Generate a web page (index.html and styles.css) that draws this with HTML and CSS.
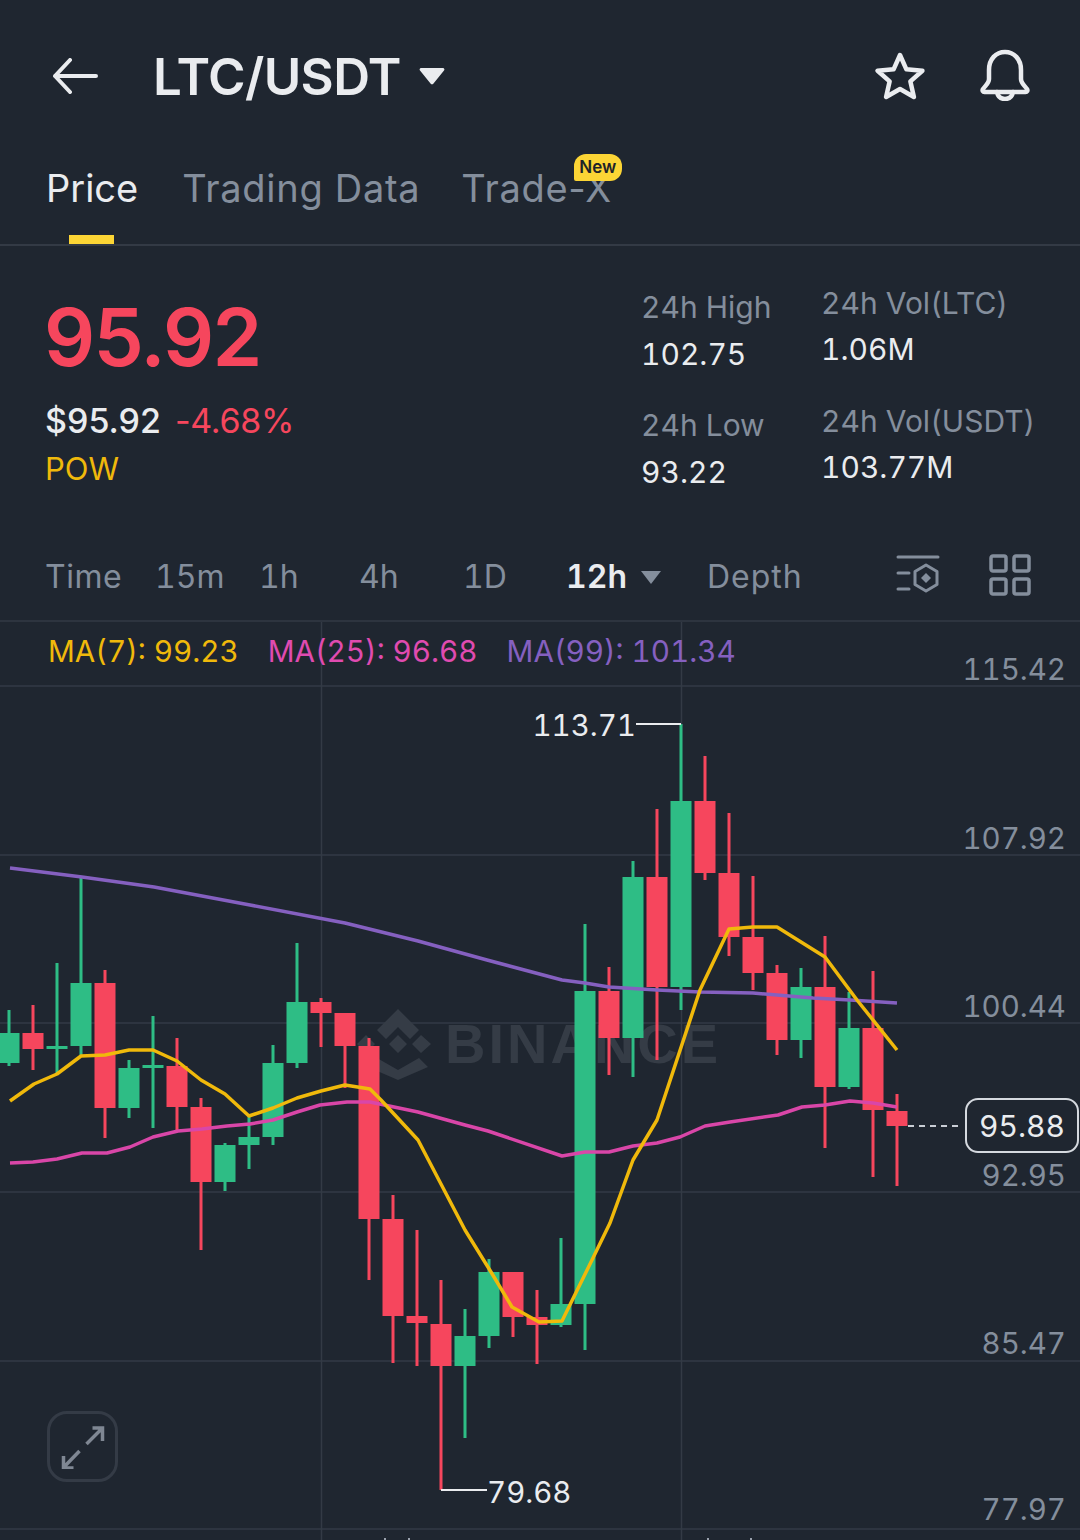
FILE: index.html
```html
<!DOCTYPE html>
<html lang="en">
<head>
    <meta charset="UTF-8">
    <meta name="viewport" content="width=device-width, initial-scale=1.0">
    <title>LTC/USDT</title>
    <link rel="stylesheet" href="styles.css">
</head>
<body>
    <div class="app">
        <header class="header">
            <svg class="back-icon" viewBox="0 0 46 36" fill="none" stroke="#eaecef" stroke-width="4" stroke-linecap="round" stroke-linejoin="round">
                <path d="M44 18H3M18 2L3 18l15 16"/>
            </svg>
            <div class="pair">LTC/USDT</div>
            <svg class="pair-caret" viewBox="0 0 26 18"><path d="M2 1h22a1.500 1.500 0 0 1 1 2.500L14.500 16.500a2 2 0 0 1-3 0L1 3.500A1.500 1.500 0 0 1 2 1z" fill="#eaecef"/></svg>
            <svg class="star-icon" viewBox="0 0 50 48" fill="none" stroke="#eaecef" stroke-width="4.500" stroke-linejoin="round">
                <path d="M25 3l6.400 14.300 16 1.500-12 10.600 3.500 15.600L25 37l-13.900 8 3.500-15.600-12-10.600 16-1.500z"/>
            </svg>
            <svg class="bell-icon" viewBox="0 0 50 52" fill="none" stroke="#eaecef" stroke-width="4.500" stroke-linejoin="round" stroke-linecap="round">
                <path d="M9 21c0-11 7-18 16-18s16 7 16 18v9c0 4 3 6 6 10 1 1.500 0 3-1.500 3h-41c-1.500 0-2.500-1.500-1.500-3 3-4 6-6 6-10z"/>
                <path d="M17 43c1 5 4 7 8 7s7-2 8-7"/>
            </svg>
        </header>

        <nav class="tabs">
            <div class="tab tab-active">Price<span class="tab-bar"></span></div>
            <div class="tab">Trading Data</div>
            <div class="tab tab-trade">Trade-X<span class="badge">New</span></div>
        </nav>

        <section class="stats">
            <div class="stats-main">
                <div class="last-price">95.92</div>
                <div class="change-row">
                    <span class="fiat">$95.92</span>
                    <span class="change">-4.68%</span>
                </div>
                <div class="tag">POW</div>
            </div>
            <div class="stats-col stats-col-left">
                <div class="stat">
                    <div class="stat-label">24h High</div>
                    <div class="stat-value">102.75</div>
                </div>
                <div class="stat">
                    <div class="stat-label">24h Low</div>
                    <div class="stat-value">93.22</div>
                </div>
            </div>
            <div class="stats-col">
                <div class="stat">
                    <div class="stat-label">24h Vol(LTC)</div>
                    <div class="stat-value">1.06M</div>
                </div>
                <div class="stat">
                    <div class="stat-label">24h Vol(USDT)</div>
                    <div class="stat-value">103.77M</div>
                </div>
            </div>
        </section>

        <div class="intervals">
            <span class="interval w-time">Time</span>
            <span class="interval w-15m">15m</span>
            <span class="interval w-1h">1h</span>
            <span class="interval w-4h">4h</span>
            <span class="interval w-1d">1D</span>
            <span class="interval interval-active">12h</span>
            <svg class="interval-caret" viewBox="0 0 22 13"><path d="M1 0h20L11 13z" fill="#848e9c"/></svg>
            <span class="interval w-depth">Depth</span>
            <svg class="settings-icon" viewBox="0 0 44 42" fill="none" stroke="#848e9c" stroke-width="3" stroke-linecap="round">
                <path d="M2 2h40M2 18h11M2 34h11"/>
                <path d="M30 10l11 6.500v13L30 36l-11-6.500v-13z" stroke-linejoin="round"/>
                <path d="M30 18l5 5-5 5-5-5z" fill="#848e9c" stroke="none"/>
            </svg>
            <svg class="grid-icon" viewBox="0 0 42 42" fill="none" stroke="#848e9c" stroke-width="3.500">
                <rect x="2" y="2" width="15" height="15" rx="2"/>
                <rect x="25" y="2" width="15" height="15" rx="2"/>
                <rect x="2" y="25" width="15" height="15" rx="2"/>
                <rect x="25" y="25" width="15" height="15" rx="2"/>
            </svg>
        </div>

        <div class="chart">
            <svg class="chart-svg" id="chart-svg" viewBox="0 622 1080 918">
                <g class="grid">
                    <path d="M0 686H1080M0 855H1080M0 1023H1080M0 1192H1080M0 1361H1080M0 1529H1080M321.500 622V1540M681.500 622V1540"/>
                </g>
                <g class="watermark">
                    <path d="M398 1009l21 21-9 9-12-12-12 12-9-9zM431 1044l-10 9-9-9 9-9zM398 1035l9 9-9 9-9-9zM375 1044l-9 9-9-9 9-9zM419 1058l9 9-30 13-30-13 9-9 21 12z"/>
                    <text x="445" y="1063">BINANCE</text>
                </g>
                <g id="candles"></g>
                <polyline class="ma ma99" points="10,868 82,877 154,887 250,905 345,923 418,941 487,960 562,980 585,983 609,987 657,990 700,992 753,993 813,998 850,1000 897,1003"/>
                <polyline class="ma ma25" points="10,1163 33,1162 57,1159 82,1153 107,1153 130,1147 153,1137 178,1131 202,1129 227,1126 250,1124 273,1120 297,1112 320,1105 347,1102 370,1102 418,1112 465,1125 488,1131 562,1156 585,1152 609,1152 633,1146 657,1143 680,1137 705,1126 730,1122 778,1115 802,1107 825,1105 850,1101 873,1103 897,1107"/>
                <polyline class="ma ma7" points="10,1101 34,1084 57,1074 81,1056 105,1055 129,1050 153,1050 177,1061 201,1080 225,1094 249,1116 273,1108 297,1098 321,1091 345,1085 370,1089 381,1100 418,1140 465,1230 491,1272 512,1307 539,1322 562,1321 592,1260 610,1223 633,1160 657,1120 700,990 729,929 753,927 777,927 825,957 857,1000 897,1050"/>
                <path class="marker" d="M636 724H681M441 1490H487"/>
                <path class="last-line" d="M908 1126H963"/>
                <!-- tops of the time axis labels, only just on screen -->
                <path class="time-ticks" d="M385 1538v2M409 1538v2M708 1538v2M751 1538v2"/>
            </svg>

            <div class="ma-legend">
                <span class="ma-seven">MA(7): 99.23</span>
                <span class="ma-twentyfive">MA(25): 96.68</span>
                <span class="ma-ninetynine">MA(99): 101.34</span>
            </div>

            <!-- price axis, placed at the gridlines -->
            <span class="axis axis-1">115.42</span>
            <span class="axis axis-2">107.92</span>
            <span class="axis axis-3">100.44</span>
            <span class="axis axis-4">92.95</span>
            <span class="axis axis-5">85.47</span>
            <span class="axis axis-6">77.97</span>

            <span class="extreme extreme-high">113.71</span>
            <span class="extreme extreme-low">79.68</span>
            <span class="last-pill">95.88</span>

            <div class="expand">
                <svg viewBox="0 0 44 44" fill="none" stroke="#7f8793" stroke-width="3.500">
                    <path d="M25.500 19L41 3.500M31.500 3H41.500V16M18.500 26L3 42M12.500 43H2.500V31"/>
                </svg>
            </div>
        </div>
    </div>

    <script>
        // x of the first candle is 9, then one every 24px
        // [dir, bodyTop, bodyBottom, wickTop, wickBottom]
        let candles = [
            ["g", 1033, 1063, 1010, 1066],
            ["r", 1033, 1049, 1005, 1070],
            ["g", 1046, 1049, 963, 1073],
            ["g", 983, 1046, 877, 1055],
            ["r", 983, 1108, 970, 1138],
            ["g", 1068, 1108, 1060, 1118],
            ["g", 1065, 1068, 1016, 1128],
            ["r", 1066, 1107, 1038, 1130],
            ["r", 1107, 1182, 1098, 1250],
            ["g", 1145, 1182, 1143, 1191],
            ["g", 1137, 1145, 1115, 1169],
            ["g", 1063, 1137, 1045, 1145],
            ["g", 1002, 1063, 943, 1068],
            ["r", 1002, 1013, 998, 1047],
            ["r", 1013, 1046, 1013, 1088],
            ["r", 1046, 1219, 1038, 1280],
            ["r", 1219, 1316, 1195, 1363],
            ["r", 1316, 1323, 1230, 1366],
            ["r", 1324, 1366, 1280, 1490],
            ["g", 1336, 1366, 1309, 1438],
            ["g", 1272, 1336, 1259, 1348],
            ["r", 1272, 1317, 1272, 1337],
            ["r", 1317, 1325, 1290, 1364],
            ["g", 1304, 1325, 1238, 1327],
            ["g", 991, 1304, 924, 1350],
            ["r", 991, 1038, 967, 1075],
            ["g", 877, 1038, 861, 1077],
            ["r", 877, 987, 809, 1060],
            ["g", 801, 987, 724, 1010],
            ["r", 801, 873, 756, 880],
            ["r", 873, 937, 813, 956],
            ["r", 937, 973, 876, 990],
            ["r", 973, 1040, 965, 1055],
            ["g", 987, 1040, 968, 1058],
            ["r", 987, 1087, 936, 1148],
            ["g", 1028, 1087, 992, 1089],
            ["r", 1028, 1110, 971, 1177],
            ["r", 1111, 1126, 1094, 1186]
        ];

        let html = "";
        candles.forEach(function(c, i) {
            let x = 9 + i * 24;
            let cls = c[0] === "g" ? "up" : "down";
            html += `<rect class="${cls}" x="${x - 1.5}" y="${c[3]}" width="3" height="${c[4] - c[3]}"/>`;
            html += `<rect class="${cls}" x="${x - 10.5}" y="${c[1]}" width="21" height="${c[2] - c[1]}"/>`;
        });
        document.getElementById("candles").innerHTML = html;
    </script>
</body>
</html>
```

FILE: styles.css
```css
* {
    box-sizing: border-box;
}

body {
    margin: 0;
    background-color: #1f2630;
    font-family: 'Inter', 'Liberation Sans', sans-serif;
    font-variant-numeric: tabular-nums;
    color: #eaecef;
}

.app {
    width: 1080px;
    height: 1540px;
    overflow: hidden;
    display: flex;
    flex-direction: column;
}

/* header */
.header {
    height: 152px;
    padding: 0 50px 0 52px;
    display: flex;
    align-items: center;
}

.back-icon {
    width: 46px;
    height: 36px;
    margin-right: 55px;
}

.pair {
    margin-top: 2px;
    font-size: 51px;
    font-weight: 600;
    font-variant-numeric: normal;
    letter-spacing: -0.600px;
    line-height: 60px;
}

.pair-caret {
    width: 26px;
    height: 18px;
    margin-left: 18px;
}

.star-icon {
    width: 50px;
    height: 48px;
    margin-left: auto;
    margin-right: 55px;
}

.bell-icon {
    width: 50px;
    height: 52px;
    margin-top: -2px;
}

/* tabs */
.tabs {
    height: 94px;
    padding-left: 46px;
    display: flex;
    gap: 44px;
    border-bottom: 2px solid #333a45;
    font-variant-numeric: normal;
}

.tab {
    position: relative;
    font-size: 38px;
    letter-spacing: 0.700px;
    line-height: 73px;
    color: #848e9c;
}

.tab-active {
    letter-spacing: 0;
    color: #eaecef;
}

.tab-trade {
    margin-left: -3px;
}

.tab-bar {
    position: absolute;
    left: 23px;
    bottom: 0;
    width: 45px;
    height: 9px;
    background-color: #fcd535;
}

.badge {
    position: absolute;
    top: 2px;
    right: -10px;
    width: 48px;
    height: 27px;
    border-radius: 12px 12px 12px 2px;
    background-color: #fcd535;
    color: #1e2329;
    font-size: 17px;
    font-weight: 600;
    letter-spacing: 0;
    line-height: 27px;
    text-align: center;
}

/* price block */
.stats {
    height: 282px;
    padding: 47px 0 0 45px;
    display: flex;
}

.stats-main {
    width: 596px;
    font-variant-numeric: normal;
}

.last-price {
    margin-left: -1px;
    font-size: 80px;
    font-weight: 600;
    letter-spacing: -1.700px;
    line-height: 88px;
    color: #f6465d;
}

.change-row {
    margin-top: 18px;
    display: flex;
    gap: 14px;
    font-size: 34px;
    line-height: 44px;
}

.fiat {
    font-weight: 500;
}

.change {
    letter-spacing: -0.300px;
    color: #f6465d;
}

.tag {
    margin-top: 4px;
    font-size: 31px;
    line-height: 44px;
    color: #f0b90b;
}

.stats-col {
    margin-top: -12px;
    display: flex;
    flex-direction: column;
    gap: 28px;
}

.stats-col-left {
    width: 180px;
    padding-top: 4px;
}

.stats-col-left .stat-value {
    padding-top: 1px;
}

.stat {
    height: 90px;
}

.stat-label {
    font-size: 30px;
    line-height: 44px;
    color: #848e9c;
}

.stat-value {
    font-size: 30px;
    line-height: 48px;
    color: #eaecef;
}

/* interval bar */
.intervals {
    height: 94px;
    padding: 6px 0 0 45px;
    border-bottom: 2px solid #2d343f;
    display: flex;
    align-items: center;
}

.interval {
    font-size: 32px;
    line-height: 86px;
    color: #848e9c;
}

.w-time {
    width: 110px;
    letter-spacing: 0.500px;
}

.w-15m { width: 104px; }
.w-1h { width: 100px; }
.w-4h { width: 104px; }
.w-1d { width: 103px; }

.interval-active {
    color: #eaecef;
    font-weight: 600;
}

.interval-caret {
    width: 22px;
    height: 13px;
    margin-left: 13px;
}

.w-depth {
    margin-left: 45px;
    letter-spacing: 1px;
}

.settings-icon {
    width: 44px;
    height: 42px;
    margin-left: 93px;
    margin-top: -2px;
}

.grid-icon {
    width: 42px;
    height: 42px;
    margin-left: 49px;
    margin-top: -4px;
}

/* chart */
.chart {
    position: relative;
    flex: 1;
}

.chart-svg {
    position: absolute;
    left: 0;
    top: 0;
    width: 1080px;
    height: 918px;
}

.grid path {
    stroke: #333a45;
    stroke-width: 1.500;
    fill: none;
}

.watermark {
    fill: #353c46;
}

.watermark text {
    font-family: 'Liberation Sans', sans-serif;
    font-size: 56px;
    font-weight: 700;
    letter-spacing: 3px;
}

.up {
    fill: #2ebd85;
}

.down {
    fill: #f6465d;
}

.ma {
    fill: none;
    stroke-width: 3.500;
    stroke-linejoin: round;
}

.ma7 {
    stroke: #f0b90b;
}

.ma25 {
    stroke: #d946a8;
}

.ma99 {
    stroke: #8560c0;
}

.marker {
    fill: none;
    stroke: #eaecef;
    stroke-width: 2;
}

.last-line {
    fill: none;
    stroke: #c9ced6;
    stroke-width: 2;
    stroke-dasharray: 6 5;
}

.time-ticks {
    fill: none;
    stroke: #9aa1ad;
    stroke-width: 2;
}

.ma-legend {
    position: absolute;
    left: 48px;
    top: 9px;
    display: flex;
    gap: 29px;
    font-size: 29.700px;
    line-height: 40px;
}

.ma-seven { color: #f0b90b; }
.ma-twentyfive { color: #e04bb0; }
.ma-ninetynine { color: #8560c0; }

.axis {
    position: absolute;
    right: 14px;
    font-size: 29.500px;
    line-height: 40px;
    color: #848e9c;
}

.axis-1 { top: 27px; }
.axis-2 { top: 196px; }
.axis-3 { top: 364px; }
.axis-4 { top: 533px; }
.axis-5 { top: 701px; }
.axis-6 { top: 867px; }

.extreme {
    position: absolute;
    font-size: 29.500px;
    line-height: 40px;
    color: #eaecef;
}

.extreme-high {
    right: 444px;
    top: 83px;
}

.extreme-low {
    left: 487px;
    top: 850px;
}

.last-pill {
    position: absolute;
    left: 965px;
    top: 476px;
    width: 114px;
    height: 55px;
    border: 2px solid #d5d9df;
    border-radius: 13px;
    background-color: #1f2630;
    font-size: 30px;
    line-height: 52px;
    text-align: center;
}

.expand {
    position: absolute;
    left: 47px;
    top: 789px;
    width: 71px;
    height: 71px;
    border: 3px solid #343b46;
    border-radius: 20px;
    display: flex;
    align-items: center;
    justify-content: center;
}

.expand svg {
    width: 44px;
    height: 44px;
}
```
